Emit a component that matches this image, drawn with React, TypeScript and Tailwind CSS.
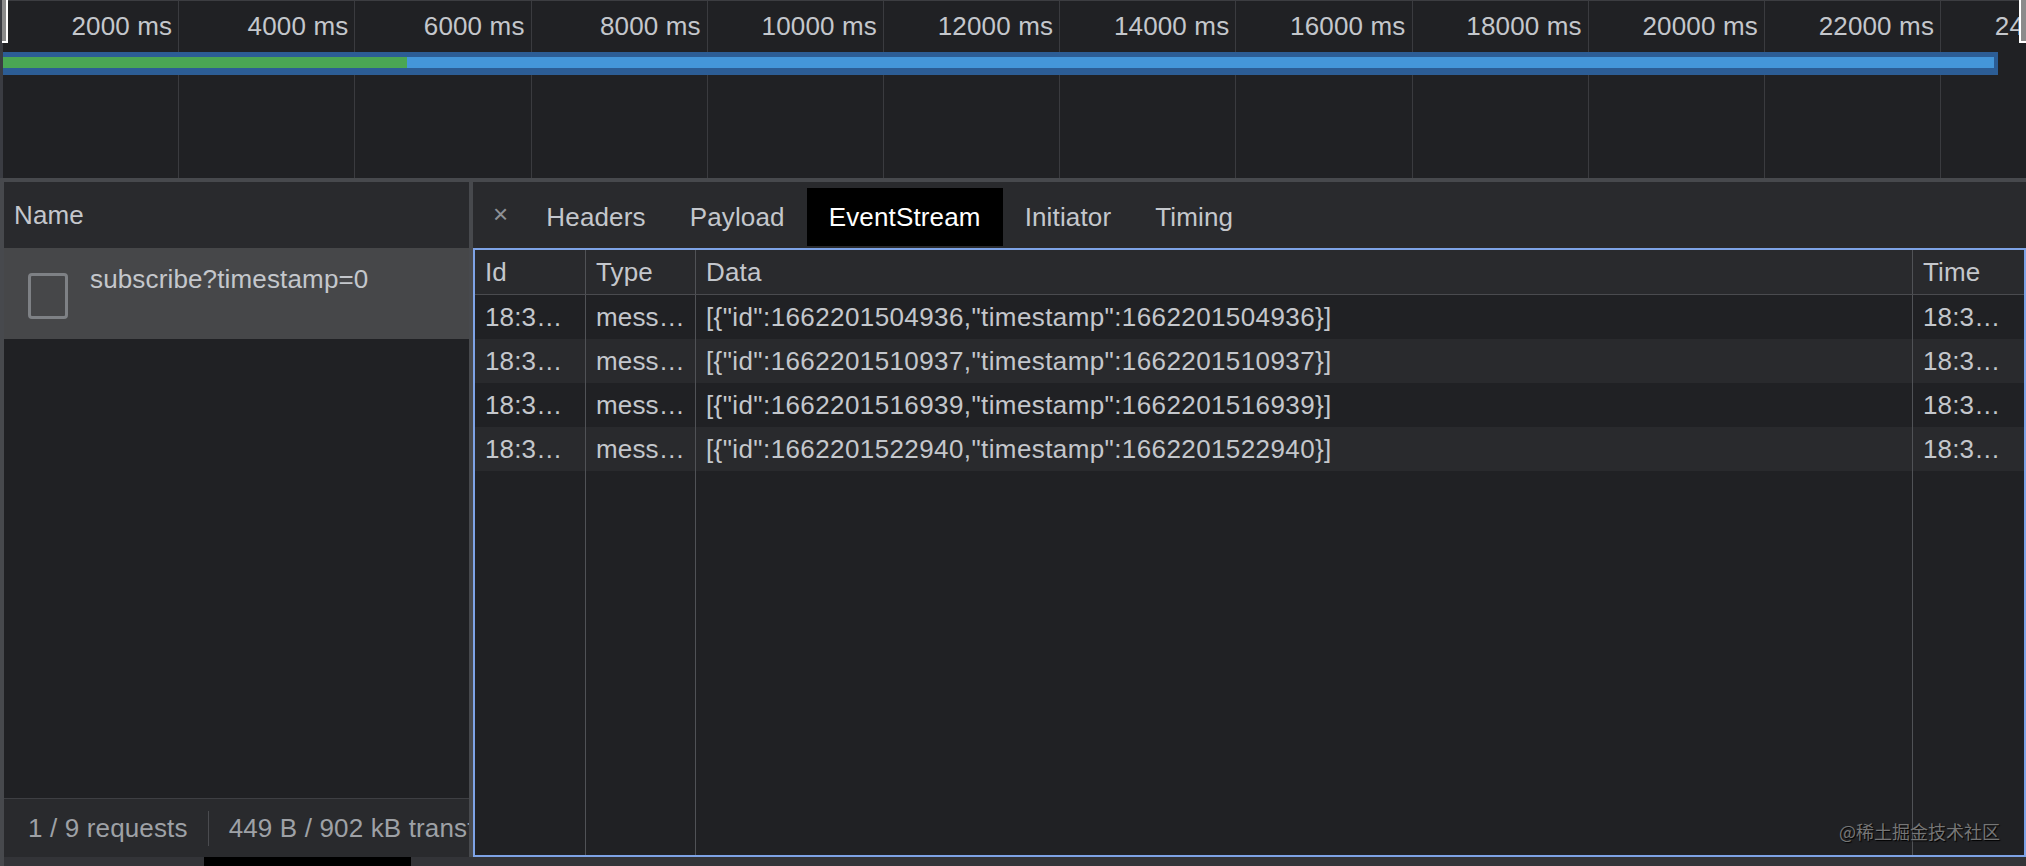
import React from 'react';

const ticks = [
	'2000 ms',
	'4000 ms',
	'6000 ms',
	'8000 ms',
	'10000 ms',
	'12000 ms',
	'14000 ms',
	'16000 ms',
	'18000 ms',
	'20000 ms',
	'22000 ms',
	'24000 ms',
];

const messages = [
	'[{"id":1662201504936,"timestamp":1662201504936}]',
	'[{"id":1662201510937,"timestamp":1662201510937}]',
	'[{"id":1662201516939,"timestamp":1662201516939}]',
	'[{"id":1662201522940,"timestamp":1662201522940}]',
];

const tabs = ['Headers', 'Payload', 'EventStream', 'Initiator', 'Timing'];

// overview strip with time ticks and the single request bar
const Overview = () => (
	<div className="relative h-[178px] shrink-0 border-t border-[#3c3d41] border-l-[3px] border-l-[#3a3c42] flex">
		{ticks.map((t) => (
			<div
				key={t}
				className="w-[176.2px] shrink-0 h-full border-r border-[#3a3b3f] text-right pr-[6px] pt-[10px] leading-[30px] whitespace-nowrap"
			>
				{t}
			</div>
		))}

		<div className="absolute left-0 top-[51px] w-[1995px] h-[23px] bg-[#2c5d95]">
			<div className="absolute left-0 right-[4px] top-[5px] h-[11px] flex">
				<div className="w-[404px] h-full bg-[#4aa654]" />
				<div className="flex-1 h-full bg-[#4496d9]" />
			</div>
		</div>

		{/* resize handles */}
		<div className="absolute -top-px -left-px w-[6px] h-[43px] bg-[#8b8b8b] border-r-2 border-b-2 border-white" />
		<div className="absolute -top-px left-[2016px] w-[7px] h-[43px] bg-[#8b8b8b] border-l-2 border-b-2 border-white" />
	</div>
);

const RequestList = () => (
	<div className="w-[465px] shrink-0 flex flex-col bg-[#202124] overflow-hidden">
		<div className="h-[66px] shrink-0 bg-[#292a2d] flex items-center px-[10px] leading-[30px]">Name</div>
		<div className="h-[91px] shrink-0 bg-[#464749] flex items-start gap-[22px] pl-[24px] pt-[16px]">
			<div className="mt-[9px] w-[40px] h-[46px] rounded-[4px] border-[3px] border-[#7e8185]" />
			<div className="leading-[30px]">subscribe?timestamp=0</div>
		</div>
		<div className="flex-1" />
		<div className="h-[59px] shrink-0 border-t border-[#3e3f43] bg-[#292a2d] flex items-center pl-[24px] text-[#9ea1a6] leading-[30px] whitespace-nowrap overflow-hidden">
			<span>1 / 9 requests</span>
			<span className="mx-[20px] w-px h-[35px] bg-[#4a4b4f] shrink-0" />
			<span>449 B / 902 kB transferred</span>
		</div>
	</div>
);

const rowGrid = 'grid grid-cols-[111px_110px_1fr_111px]';
const cell = 'px-[10px] flex items-center whitespace-nowrap overflow-hidden';

const Details = () => (
	<div className="flex-1 flex flex-col min-w-0">
		<div className="h-[66px] shrink-0 bg-[#292a2d] flex items-end pb-[2px] leading-[30px]">
			<span className="self-center pl-[20px] pr-[16px] text-[#8e9196]">×</span>
			{tabs.map((t) =>
				t === 'EventStream' ? (
					<div key={t} className="h-[58px] px-[22px] flex items-center bg-black text-white">
						{t}
					</div>
				) : (
					<div key={t} className="h-[58px] px-[22px] flex items-center">
						{t}
					</div>
				)
			)}
		</div>

		<div className="flex-1 flex flex-col border-2 border-[#7ea3e6] bg-[#202124] leading-[30px]">
			<div className={`${rowGrid} h-[45px] shrink-0 bg-[#292a2d] border-b border-[#4a4b4f]`}>
				<div className={`${cell} border-r border-[#505256]`}>Id</div>
				<div className={`${cell} border-r border-[#505256]`}>Type</div>
				<div className={`${cell} border-r border-[#505256]`}>Data</div>
				<div className={cell}>Time</div>
			</div>
			{messages.map((m, i) => (
				<div
					key={m}
					className={`${rowGrid} h-[44px] shrink-0 ${i % 2 === 0 ? 'bg-[#202124]' : 'bg-[#292a2d]'}`}
				>
					<div className={`${cell} border-r border-[#505256]`}>18:3…</div>
					<div className={`${cell} border-r border-[#505256]`}>mess…</div>
					<div className={`${cell} border-r border-[#505256] tracking-[0.4px]`}>{m}</div>
					<div className={cell}>18:3…</div>
				</div>
			))}
			<div className={`${rowGrid} flex-1`}>
				<div className="border-r border-[#505256]" />
				<div className="border-r border-[#505256]" />
				<div className="border-r border-[#505256]" />
				<div />
			</div>
		</div>
	</div>
);

export default function App() {
	return (
		<div className="relative w-[2026px] h-[866px] overflow-hidden bg-[#202124] text-[#c4c7cc] text-[26px] tracking-[0.15px] font-['Liberation_Sans',Arial,sans-serif] flex flex-col">
			<Overview />

			<div className="flex-1 flex flex-col bg-[#47494d] pt-[4px] pl-[4px]">
				<div className="h-[675px] shrink-0 flex gap-[4px]">
					<RequestList />
					<Details />
				</div>
				<div className="flex-1 bg-[#333438] relative">
					<div className="absolute left-[200px] top-0 w-[207px] h-full bg-black" />
				</div>
			</div>

			<div className="absolute right-[26px] bottom-[24px] text-[18px] leading-[22px] tracking-normal text-[#767676] font-['Noto_Sans_CJK_SC',sans-serif] [text-shadow:1px_1px_1px_#000]">
				@稀土掘金技术社区
			</div>
		</div>
	);
}
